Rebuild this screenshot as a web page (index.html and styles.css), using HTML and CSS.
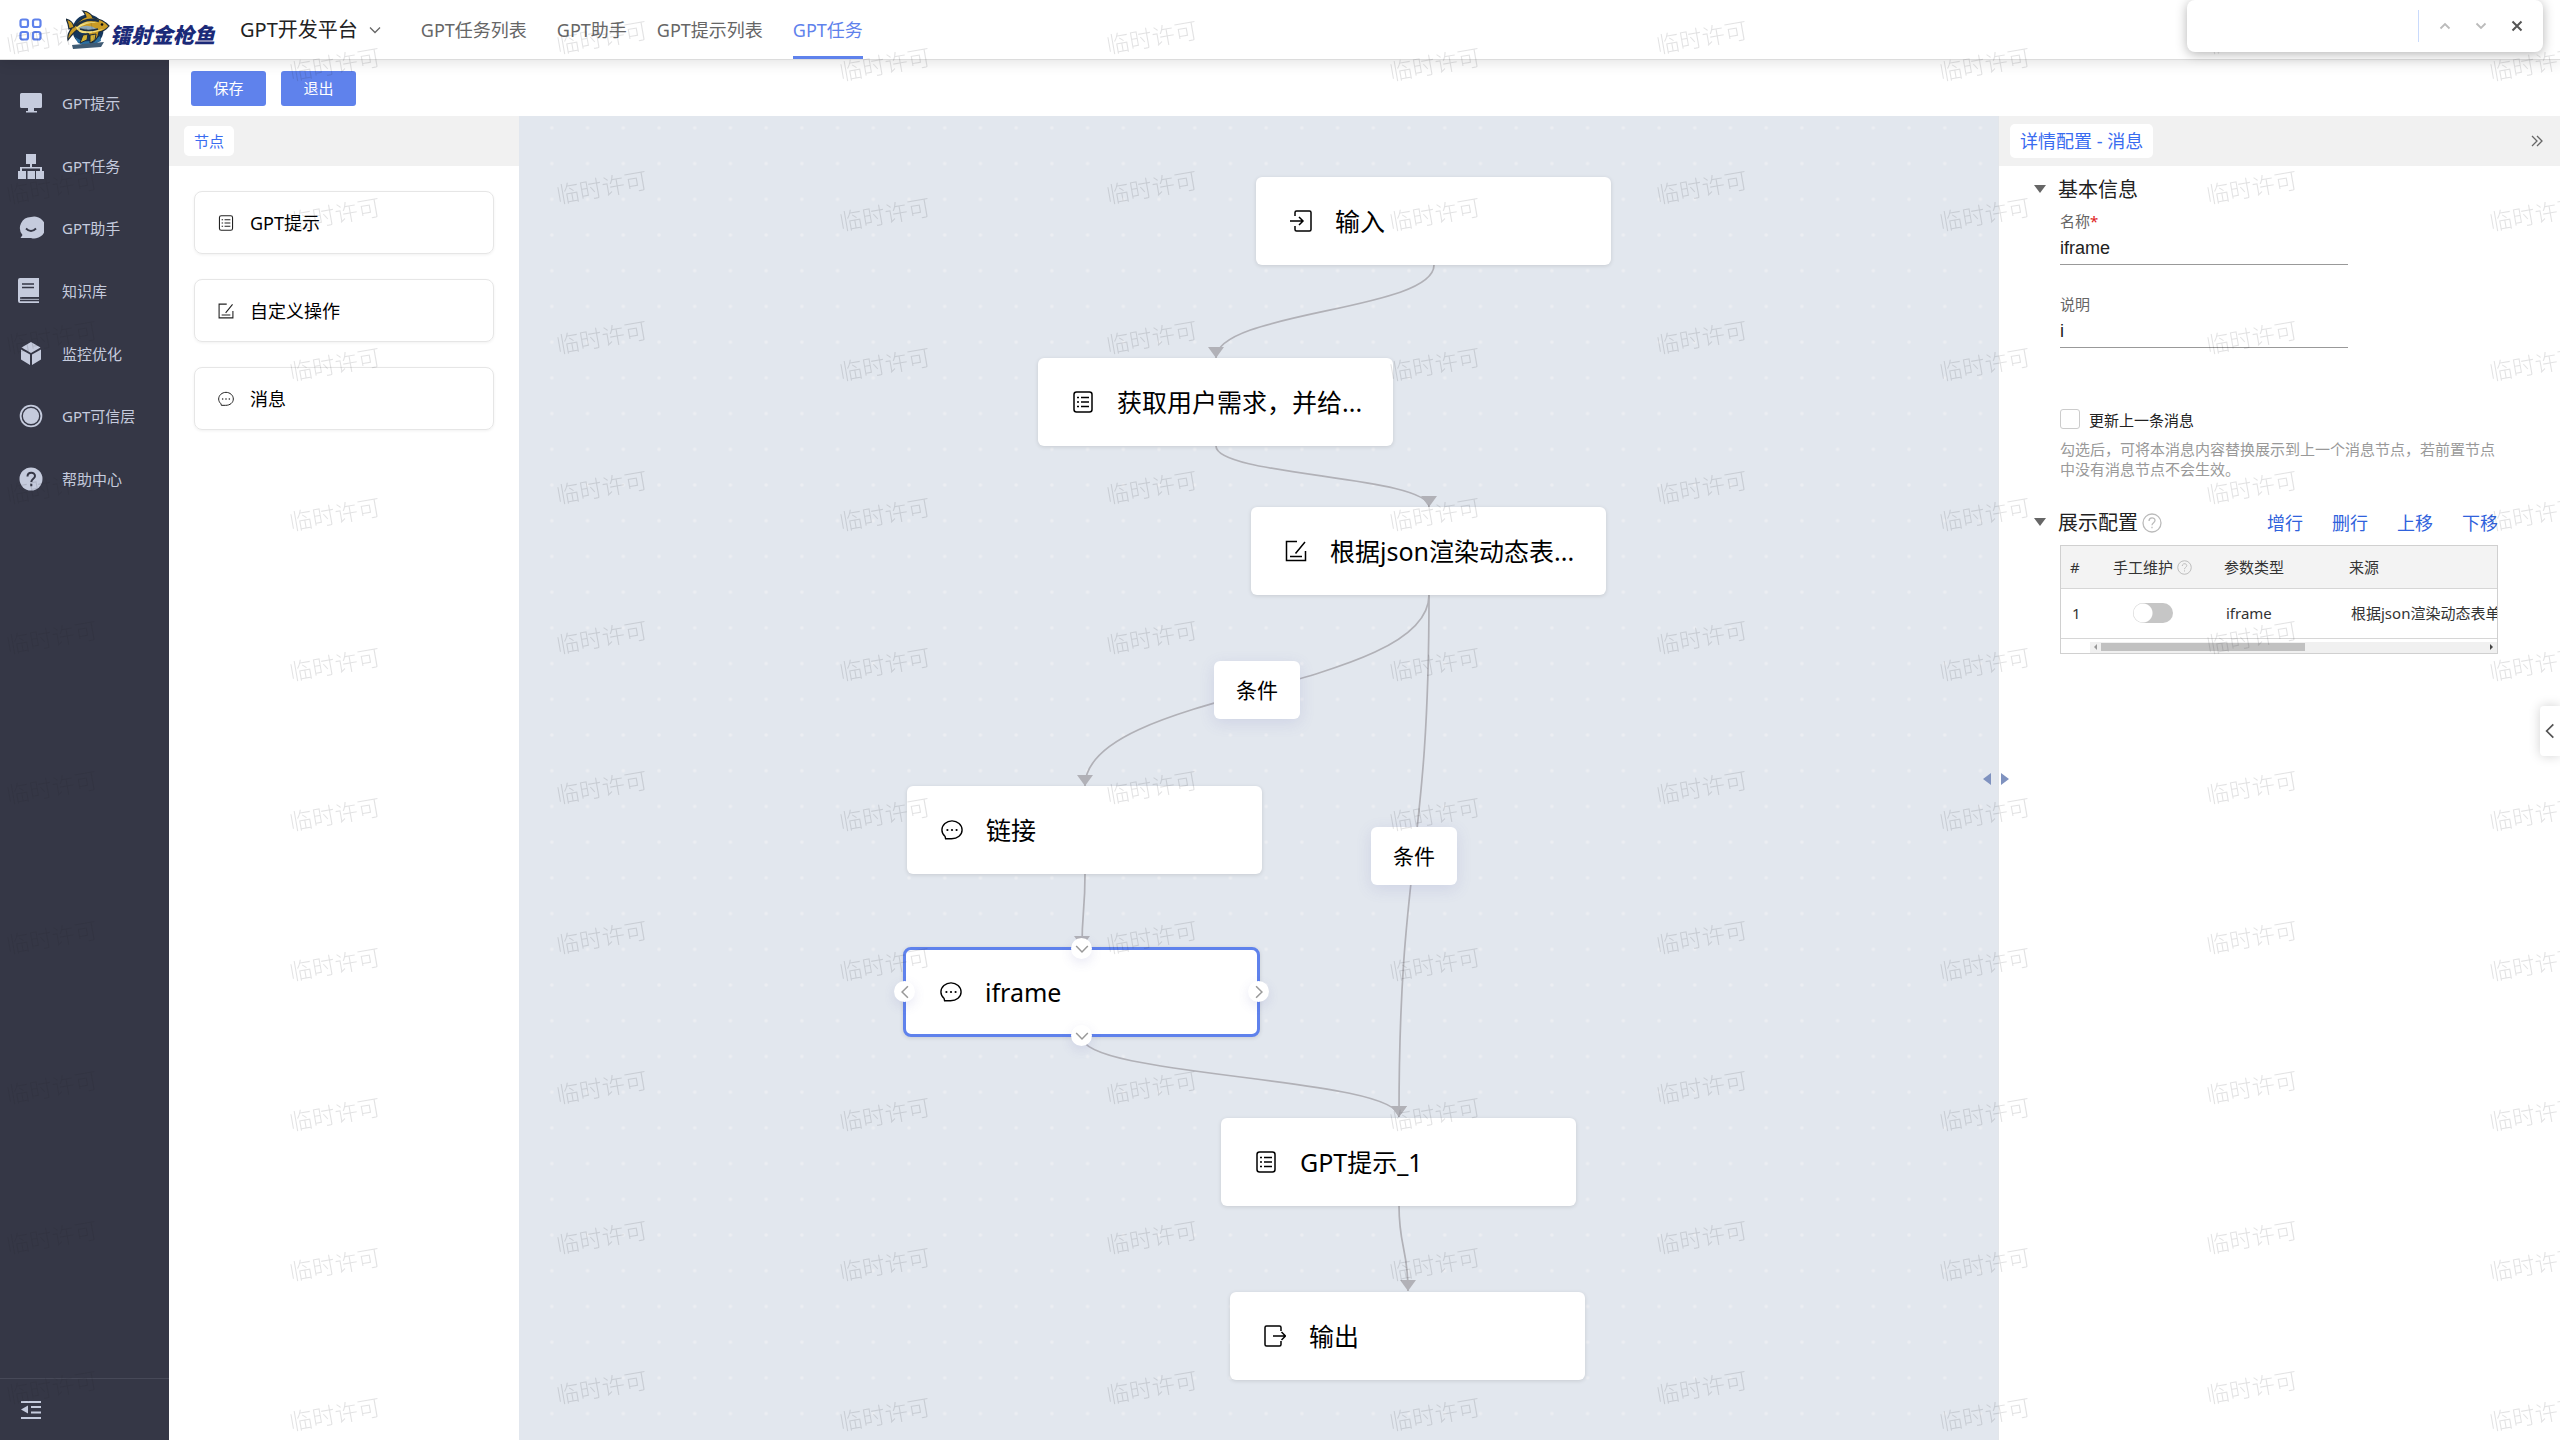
FILE: index.html
```html
<!DOCTYPE html>
<html lang="zh-CN">
<head>
<meta charset="utf-8">
<title>GPT开发平台</title>
<link rel="stylesheet" href="styles.css">
</head>
<body>
<svg class="defs" aria-hidden="true">
  <symbol id="i-list" viewBox="0 0 22 22"><g fill="none" stroke="currentColor" stroke-width="1.5"><rect x="2" y="1" width="18" height="20" rx="2.5"/><path d="M5 6.5h2M9 6.5h8M5 11h2M9 11h8M5 15.5h2M9 15.5h8"/></g></symbol>
  <symbol id="i-edit" viewBox="0 0 22 22"><g fill="none" stroke="currentColor" stroke-width="1.5"><path d="M12 1.5H1.5v19h19V11M20 2L10.500 13.500M5 16.500h12"/></g></symbol>
  <symbol id="i-msg" viewBox="0 0 24 22"><path d="M5 20.500H11.500C18 20.500 23 16.500 23 11S18 1 12 1 1 5.500 1 11c0 3 1.500 5.500 3.500 7.200z" fill="none" stroke="currentColor" stroke-width="1.5"/><g fill="currentColor"><circle cx="7" cy="11" r="1.200"/><circle cx="12" cy="11" r="1.200"/><circle cx="17" cy="11" r="1.200"/></g></symbol>
  <symbol id="i-in" viewBox="0 0 22 22"><path d="M5 6V2.500Q5 1 6.500 1H19.500Q21 1 21 2.500V19.500Q21 21 19.500 21H6.500Q5 21 5 19.500V16M0 11H13M9 7l4 4-4 4" fill="none" stroke="currentColor" stroke-width="1.5"/></symbol>
  <symbol id="i-out" viewBox="0 0 22 22"><path d="M17 6V2.500Q17 1 15.500 1H2.500Q1 1 1 2.500V19.500Q1 21 2.500 21H15.500Q17 21 17 19.500V16M9 11H21.500M17.500 7l4 4-4 4" fill="none" stroke="currentColor" stroke-width="1.5"/></symbol>
  <symbol id="i-help" viewBox="0 0 20 20"><circle cx="10" cy="10" r="9" fill="none" stroke="currentColor" stroke-width="1.300"/><path d="M7 8c0-4 6-4 6-.5C13 9.700 10 9.700 10 12.300M10 13.800v1.500" fill="none" stroke="currentColor" stroke-width="1.300"/></symbol>
  <symbol id="i-up" viewBox="0 0 12 12"><path d="M1.500 8.500L6 4l4.500 4.500" fill="none" stroke="currentColor" stroke-width="1.800"/></symbol>
  <symbol id="i-down" viewBox="0 0 12 12"><path d="M1 3.500l5 5 5-5" fill="none" stroke="currentColor" stroke-width="1.300"/></symbol>
  <symbol id="i-left" viewBox="0 0 12 12"><path d="M8.500 1l-5 5 5 5" fill="none" stroke="currentColor" stroke-width="1.300"/></symbol>
  <symbol id="i-right" viewBox="0 0 12 12"><path d="M3.500 1l5 5-5 5" fill="none" stroke="currentColor" stroke-width="1.300"/></symbol>
</svg>

<header class="topbar">
  <button class="apps" type="button" aria-label="应用">
    <svg width="24" height="24" viewBox="0 0 24 24" fill="none" stroke="#5f82ec" stroke-width="2.200"><rect x="1.500" y="1.500" width="7.500" height="7.500" rx="2"/><rect x="14" y="1.500" width="7.500" height="7.500" rx="2"/><rect x="1.500" y="14" width="7.500" height="7.500" rx="2"/><rect x="14" y="14" width="7.500" height="7.500" rx="2"/></svg>
  </button>
  <a class="logo" href="#">
    <svg width="44" height="40" viewBox="0 0 44 40">
      <circle cx="22" cy="20" r="15.500" fill="#14365c"/>
      <path d="M9 27q12 9 25-1l1 5q-13 7-23 2z" fill="#2b6fa0"/>
      <path d="M3 19Q2 12 0 9q7 2 8 8Q14 9 20 7q-1-4-3-6 8 1 10 7 10 1 16 8-4 5-10 6-1 8-8 11 0-6-3-10-7 0-11-3-4 3-9 10-1-6 4-12z" fill="#c99b24" stroke="#1a2b3c" stroke-width="1.200"/>
      <path d="M10 17q10-8 22-4-10-1-20 5 10 5 26 1-10 5-22 4-5-2-6-6z" fill="#f5df7b"/>
      <path d="M12 18q10-5 19 1-8 5-19-1z" fill="#8fa9b8"/>
      <path d="M10 16Q20 7 33 11" fill="none" stroke="#1d3144" stroke-width="2.500"/>
      <path d="M14 19q8 3 18 0" fill="none" stroke="#1d3144" stroke-width="1.500"/>
      <circle cx="36" cy="14.500" r="1.300" fill="#111"/>
      <path d="M17 25l-3 8 7-3 1-6zM24 25v8l5-3 1-6z" fill="#d6b436" stroke="#1a2b3c" stroke-width="1"/>
      <path d="M6 35l32-3-3 5-28 2z" fill="#3f5b74"/>
    </svg>
    <span>镭射金枪鱼</span>
  </a>
  <button class="product" type="button">GPT开发平台 <svg width="12" height="12"><use href="#i-down"/></svg></button>
  <nav class="tabs">
    <a href="#">GPT任务列表</a>
    <a href="#">GPT助手</a>
    <a href="#">GPT提示列表</a>
    <a href="#" class="active">GPT任务</a>
  </nav>
</header>

<div class="app">
  <aside class="sidebar">
    <nav class="menu">
      <a href="#"><svg width="26" height="26" viewBox="0 0 26 26" fill="currentColor"><path d="M3.500 3h19q1.500 0 1.500 1.500v12q0 1.500-1.500 1.500H16v3h3v1.500H8V21h2v-3H3.500Q2 18 2 16.500v-12Q2 3 3.500 3z"/></svg>GPT提示</a>
      <a href="#"><svg width="26" height="26" viewBox="0 0 26 26" fill="currentColor"><path d="M8 1h10v10h-4v3h10v4h2v8h-8v-8h4v-2.500H4V18h4v8H0v-8h2v-4h10v-3H8zM9.500 18h7.500v8H9.500z"/></svg>GPT任务</a>
      <a href="#"><svg width="26" height="26" viewBox="0 0 26 26"><path d="M13 2a11 11 0 1 1 0 21H2.500l2-3A11 11 0 0 1 13 2z" fill="currentColor"/><path d="M8 13.500q5 5 10 0" fill="none" stroke="#353746" stroke-width="1.800"/></svg>GPT助手</a>
      <a href="#"><svg width="26" height="26" viewBox="0 0 26 26"><path d="M2 0h19v19H3.500v1.500H21V25H2Q0 25 0 23V2Q0 0 2 0z" fill="currentColor"/><path d="M4 6h12M4 9.500h12M2 20h19M2 22.500h19" stroke="#353746" stroke-width="1.300"/></svg>知识库</a>
      <a href="#"><svg width="26" height="26" viewBox="0 0 26 26" fill="currentColor"><path d="M13 1l9.500 5.500L13 12 3.500 6.500zM3 8.500l9 5V24l-9-5.500zM23 8.500l-9 5V24l9-5.500z"/></svg>监控优化</a>
      <a href="#"><svg width="26" height="26" viewBox="0 0 26 26"><circle cx="13" cy="13" r="11.300" fill="currentColor"/><circle cx="13" cy="13" r="8.800" fill="none" stroke="#353746" stroke-width="1.400"/></svg>GPT可信层</a>
      <a href="#"><svg width="26" height="26" viewBox="0 0 26 26"><circle cx="13" cy="13" r="11.500" fill="currentColor"/><path d="M9.500 10.500c0-5 7.500-5 7.500-.5 0 3-3.700 2.500-3.700 6M13.300 17.800v2.400" fill="none" stroke="#353746" stroke-width="2"/></svg>帮助中心</a>
    </nav>
    <button class="collapse" type="button" aria-label="收起"><svg width="20" height="20" viewBox="0 0 20 20" fill="currentColor"><path d="M0 1h20v2H0zM10 6h10v2H10zM10 11.500h10v2H10zM0 17h20v2H0zM7 5.500v8L0 9.500z"/></svg></button>
  </aside>

  <main class="work">
    <div class="actions"><button type="button">保存</button><button type="button">退出</button></div>
    <div class="editor">
      <section class="palette">
        <div class="bar"><span class="pill small">节点</span></div>
        <ul>
          <li><svg width="16" height="16"><use href="#i-list"/></svg>GPT提示</li>
          <li><svg width="16" height="16"><use href="#i-edit"/></svg>自定义操作</li>
          <li><svg width="16" height="16"><use href="#i-msg"/></svg>消息</li>
        </ul>
      </section>

      <section class="canvas">
        <svg class="edges">
          <defs>
            <pattern id="dots" width="50" height="50" patternUnits="userSpaceOnUse" patternTransform="translate(15 -6) scale(.7143)"><circle cx="25" cy="25" r="2.500" fill="#eceef2"/></pattern>
            <marker id="arrow" markerUnits="userSpaceOnUse" markerWidth="16" markerHeight="12" refX="8" refY="11"><path d="M0 0h16L8 11z" fill="#b1b1b7"/></marker>
          </defs>
          <rect width="100%" height="100%" fill="url(#dots)"/>
          <g fill="none" stroke="#b1b1b7" stroke-width="1.700" marker-end="url(#arrow)">
            <path d="M915 149C915 195 697 195 697 242"/>
            <path d="M697 330C697 360 910 360 910 391"/>
            <path d="M910 479C910 575 566 575 566 670"/>
            <path d="M910 479C910 740 880 740 880 1001"/>
            <path d="M566 758C566 795 563 795 563 831"/>
            <path d="M563 921C563 961 880 961 880 1001"/>
            <path d="M880 1089C880 1132 889 1132 889 1175"/>
          </g>
        </svg>
        <div class="node" style="left:737px;top:61px"><svg><use href="#i-in"/></svg>输入</div>
        <div class="node" style="left:519px;top:242px"><svg><use href="#i-list"/></svg>获取用户需求，并给...</div>
        <div class="node" style="left:732px;top:391px"><svg><use href="#i-edit"/></svg>根据json渲染动态表...</div>
        <button type="button" class="cond" style="left:695px;top:545px">条件</button>
        <button type="button" class="cond" style="left:852px;top:711px">条件</button>
        <div class="node" style="left:388px;top:670px"><svg><use href="#i-msg"/></svg>链接</div>
        <div class="node selected" style="left:384px;top:831px"><svg><use href="#i-msg"/></svg>iframe
          <i class="port top"><svg><use href="#i-down"/></svg></i>
          <i class="port right"><svg><use href="#i-right"/></svg></i>
          <i class="port bottom"><svg><use href="#i-down"/></svg></i>
          <i class="port left"><svg><use href="#i-left"/></svg></i>
        </div>
        <div class="node" style="left:702px;top:1002px"><svg><use href="#i-list"/></svg>GPT提示_1</div>
        <div class="node" style="left:711px;top:1176px"><svg><use href="#i-out"/></svg>输出</div>
      </section>

      <section class="detail">
        <svg class="splitter" width="26" height="12" viewBox="0 0 26 12" fill="#7f92bf"><path d="M8 0v12L0 6zM18 0v12l8-6z"/></svg>
        <div class="bar"><span class="pill">详情配置 - 消息</span>
          <button class="fold" type="button" aria-label="收起"><svg width="12" height="12" viewBox="0 0 12 12" fill="none" stroke="#666" stroke-width="1.300"><path d="M1 1l5 5-5 5M6 1l5 5-5 5"/></svg></button></div>
        <div class="form">
          <h2>基本信息</h2>
          <div class="field"><label for="name">名称<b>*</b></label><input id="name" type="text" value="iframe"></div>
          <div class="field"><label for="desc">说明</label><input id="desc" type="text" value="i"></div>
          <div class="check"><input type="checkbox" id="upd"><label for="upd">更新上一条消息</label></div>
          <p class="note">勾选后，可将本消息内容替换展示到上一个消息节点，若前置节点中没有消息节点不会生效。</p>
          <div class="section">
            <h2>展示配置</h2><svg class="q" width="20" height="20"><use href="#i-help"/></svg>
            <div class="ops"><a href="#">增行</a><a href="#">删行</a><a href="#">上移</a><a href="#">下移</a></div>
          </div>
          <div class="grid">
            <div class="clip">
              <table>
                <thead><tr><th class="n">#</th><th class="m">手工维护 <svg class="q" width="15" height="15"><use href="#i-help"/></svg></th><th class="t">参数类型</th><th class="s">来源</th></tr></thead>
                <tbody><tr><td class="n">1</td><td class="m"><input class="switch" type="checkbox" aria-label="手工维护"></td><td>iframe</td><td>根据json渲染动态表单</td></tr></tbody>
              </table>
            </div>
            <div class="scroll"><svg width="5" height="6" viewBox="0 0 5 6"><path d="M4 0v6L1 3z" fill="#999"/></svg><div class="track"><div class="thumb"></div></div><svg width="5" height="6" viewBox="0 0 5 6"><path d="M1 0v6l3-3z" fill="#444"/></svg></div>
          </div>
        </div>
      </section>
    </div>
  </main>
</div>

<button class="drawer" type="button" aria-label="展开"><svg width="16" height="16"><use href="#i-left"/></svg></button>

<svg class="watermark" aria-hidden="true">
  <defs><pattern id="wm" width="550" height="150" patternUnits="userSpaceOnUse">
    <text transform="translate(52 38) rotate(-10)" y="8">临时许可</text>
    <text transform="translate(335 65) rotate(-10)" y="8">临时许可</text>
  </pattern></defs>
  <rect width="100%" height="100%" fill="url(#wm)"/>
</svg>

<div class="find" role="search">
  <input type="text" aria-label="查找">
  <button type="button" aria-label="上一个"><svg width="12" height="12"><use href="#i-up"/></svg></button>
  <button type="button" aria-label="下一个"><svg width="12" height="12" viewBox="0 0 12 12"><path d="M1.500 3.500L6 8l4.500-4.500" fill="none" stroke="currentColor" stroke-width="1.800"/></svg></button>
  <button type="button" class="x" aria-label="关闭"><svg width="12" height="12" viewBox="0 0 12 12"><path d="M1.500 1.500l9 9M10.500 1.500l-9 9" stroke="currentColor" stroke-width="2"/></svg></button>
</div>
</body>
</html>
```
FILE: styles.css
```css
* { box-sizing: border-box; }
body {
  margin: 0;
  height: 100vh;
  display: flex;
  flex-direction: column;
  overflow: hidden;
  background: #fff;
  color: #222;
  font: 15px/20px "Noto Sans", "Noto Sans CJK SC", sans-serif;
}
button { font: inherit; color: inherit; border: 0; padding: 0; background: none; cursor: pointer; }
a { color: inherit; text-decoration: none; }
h2 { margin: 0; font-size: 20px; line-height: 28px; font-weight: 400; }
svg { flex: none; display: block; }
.defs { position: absolute; width: 0; height: 0; }

/* top bar */
.topbar {
  position: relative;
  z-index: 2;
  height: 60px;
  flex: none;
  display: flex;
  align-items: center;
  padding-left: 19px;
  background: #fff;
  border-bottom: 1px solid #dcdcdc;
  box-shadow: 0 2px 14px rgba(0, 0, 0, .12);
}
.logo { display: flex; align-items: center; margin-left: 23px; font: italic 900 21px/28px "Noto Sans CJK SC", sans-serif; color: #1b2a78; }
.logo span { padding-top: 8px; }
.product { display: flex; align-items: center; gap: 11px; margin-left: 25px; font-size: 20px; line-height: 28px; }
.product svg { color: #666; }
.tabs { align-self: stretch; display: flex; gap: 30px; margin-left: 40px; font-size: 18px; color: #666; }
.tabs a { display: flex; align-items: center; border-bottom: 3px solid transparent; border-top: 3px solid transparent; }
.tabs .active { color: #5f82ec; border-bottom-color: #5f82ec; }

.app { flex: 1; min-height: 0; display: flex; }

/* sidebar */
.sidebar { width: 169px; flex: none; display: flex; flex-direction: column; justify-content: space-between; background: #353746; color: #c5cbdd; }
.menu { height: 450px; padding-top: 12px; display: grid; grid-auto-rows: 1fr; }
.menu a { display: flex; align-items: center; gap: 18px; padding-left: 18px; }
.collapse { display: block; height: 62px; padding-left: 21px; border-top: 1px solid #474958; }

/* editor */
.work { flex: 1; min-width: 0; display: flex; flex-direction: column; }
.actions { height: 56px; flex: none; display: flex; gap: 15px; align-items: center; padding: 0 22px; }
.actions button { width: 75px; height: 35px; border-radius: 3px; background: #5f82ec; color: #fff; }
.editor { flex: 1; min-height: 0; display: flex; }
.bar { height: 50px; display: flex; align-items: center; justify-content: space-between; background: #f1f1f1; }
.pill { height: 34px; display: flex; align-items: center; padding: 0 10px; border-radius: 5px; background: #fff; color: #3a6cf0; font-size: 18px; }
.pill.small { height: 30px; font-size: 15px; }
.palette { width: 350px; flex: none; }
.palette .bar { padding-left: 15px; }
.palette ul { list-style: none; margin: 0; padding: 25px; display: flex; flex-direction: column; gap: 25px; }
.palette li { height: 63px; display: flex; align-items: center; gap: 16px; padding-left: 23px; border: 1px solid #e6e6e6; border-radius: 8px; box-shadow: 0 1px 3px rgba(0, 0, 0, .06); font-size: 18px; color: #000; }
.palette li svg { color: #222; }

.canvas { position: relative; flex: 1; min-width: 0; overflow: hidden; background: #e2e7ee; color: #000; }
.edges { position: absolute; width: 100%; height: 100%; }
.node {
  position: absolute;
  width: 355px;
  height: 88px;
  display: flex;
  align-items: center;
  gap: 23px;
  padding-left: 34px;
  background: #fff;
  border-radius: 6px;
  box-shadow: 0 1px 4px rgba(0, 0, 0, .12);
  font-size: 25px;
  line-height: 32px;
  white-space: nowrap;
}
.node > svg { width: 22px; height: 22px; }
.node.selected { width: 357px; height: 90px; border: 3px solid #5f82ec; border-radius: 8px; }
.cond { position: absolute; width: 86px; height: 58px; border-radius: 6px; background: #fff; box-shadow: 0 4px 16px rgba(90, 90, 180, .14); font-size: 21px; }
.port { position: absolute; width: 21px; height: 21px; display: flex; align-items: center; justify-content: center; border-radius: 50%; background: #fff; color: #999; box-shadow: 0 4px 12px rgba(90, 90, 180, .14); }
.port svg { width: 14px; height: 14px; }
.port.top { left: 165px; top: -12px; }
.port.bottom { left: 165px; bottom: -12px; }
.port.left { left: -12px; top: 31px; }
.port.right { right: -12px; top: 31px; }

/* detail panel */
.detail { position: relative; width: 562px; flex: none; background: #fff; border-left: 1px solid #e3e6ea; }
.splitter { position: absolute; left: -16px; top: 657px; }
.detail .bar { padding: 0 17px 0 11px; }
.form { width: 499px; padding: 10px 0 0 61px; }
.form h2 { position: relative; margin-left: -2px; }
.form h2::before { content: ""; position: absolute; left: -24px; top: 9px; border: 6px solid transparent; border-top: 8px solid #666; border-bottom: 0; }
.field { width: 288px; height: 65px; margin: 7px 0 18px; }
.field label { display: block; color: #666; }
.field b { color: #e02020; font-weight: 400; }
.field input { display: block; width: 100%; height: 34px; padding: 2px 0 0; border: 0; border-bottom: 1px solid #999; background: none; font: 18px/24px "Liberation Sans", sans-serif; color: #222; outline: 0; }
.check { display: flex; align-items: center; gap: 9px; margin-top: 48px; }
.check input { appearance: none; width: 20px; height: 20px; margin: 0; border: 1px solid #ccc; border-radius: 3px; }
.check label { padding-top: 3px; }
.note { margin: 9px 0 30px; color: #999; }
.section { display: flex; align-items: center; }
.q { color: #bbb; }
.section .q { margin-left: 4px; }
.ops { flex: 1; display: flex; justify-content: flex-end; gap: 29px; font-size: 18px; color: #2f62dc; }
.grid { margin-top: 8px; height: 109px; border: 1px solid #d0d0d0; }
.clip { overflow: hidden; }
table { width: 480px; table-layout: fixed; border-collapse: collapse; color: #333; }
th, td { padding: 0 0 0 9px; border-bottom: 1px solid #d6d6d6; font-weight: 400; text-align: left; white-space: nowrap; }
th { height: 42px; background: #f3f3f3; }
td { height: 50px; padding-left: 11px; }
.n { width: 29px; }
.m { width: 125px; padding: 0; text-align: center; }
.t { width: 125px; }
th .q { display: inline-block; vertical-align: -2px; }
.switch { appearance: none; display: block; width: 40px; height: 20px; margin: 0 auto; border-radius: 10px; background: radial-gradient(circle at 10px 10px, #fff 9px, transparent 10px) #c6c6c6; }
.scroll { margin: 3px 0 0 29px; height: 11px; display: flex; align-items: center; gap: 3px; padding: 0 3px; background: #f0f0f0; }
.track { flex: 1; }
.thumb { width: 53%; height: 8px; background: #c1c1c1; }

/* overlays */
.drawer { position: fixed; right: 0; top: 706px; width: 20px; height: 50px; display: flex; align-items: center; justify-content: center; border-radius: 4px 0 0 4px; background: #fff; color: #555; box-shadow: 0 0 12px rgba(0, 0, 0, .18); }
.watermark { position: fixed; z-index: 5; inset: 0; width: 100%; height: 100%; pointer-events: none; }
.watermark text { font: 300 23px "Noto Sans CJK SC", sans-serif; text-anchor: middle; fill: rgba(30, 30, 40, .13); }
.find { position: fixed; z-index: 6; top: 0; right: 17px; width: 356px; height: 52px; display: flex; align-items: center; padding: 10px 8px; border-radius: 8px; background: #fff; box-shadow: 0 2px 12px rgba(0, 0, 0, .3); color: #bbb; }
.find input { flex: 1; min-width: 0; align-self: stretch; margin-right: 8px; border: 0; border-right: 1px solid #c9dafc; outline: 0; background: none; }
.find button { width: 36px; display: flex; justify-content: center; }
.find .x { color: #555; }
```
